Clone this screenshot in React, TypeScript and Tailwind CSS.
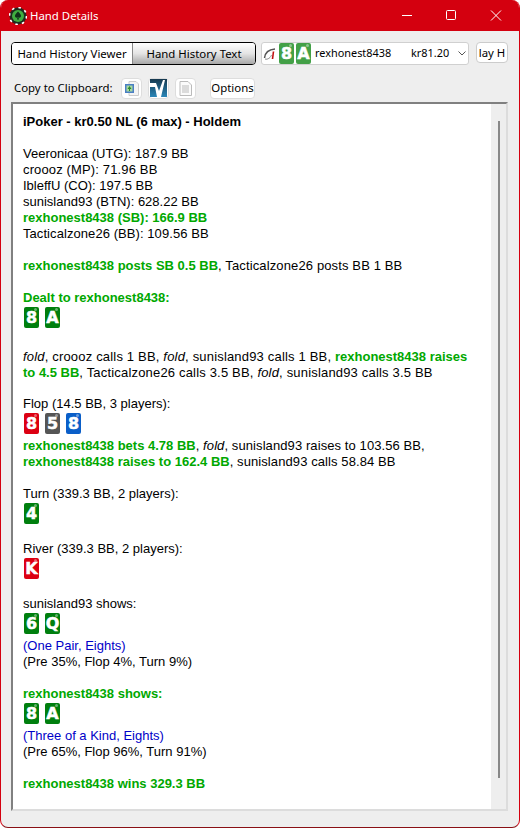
import React from "react";

const cardBg: Record<string, string> = {
  g: "bg-[#007f0e]",
  r: "bg-[#dc0012]",
  k: "bg-[#555555]",
  b: "bg-[#0a5ec8]",
  c: "bg-[#43a047]",
};

function Card({ v, c = "g" }: { v: string; c?: string }) {
  return (
    <span className={`relative flex h-[21px] w-[15px] items-center justify-center rounded-[2px] ${cardBg[c]} font-['DejaVu_Sans',sans-serif] text-[16px] leading-none font-bold text-white [-webkit-text-stroke:0.5px_white]`}>
      {v}
      <span className="absolute top-[1px] right-[2px] h-[3px] w-[3px] rounded-full bg-white/40" />
    </span>
  );
}

function Cards({ list, short }: { list: [string, string?][]; short?: boolean }) {
  return (
    <div className={`flex gap-[6px] pt-[1px] pl-[1px] ${short ? "h-[26px]" : "h-[27px]"}`}>
      {list.map(([v, c], i) => (
        <Card key={i} v={v} c={c ?? "g"} />
      ))}
    </div>
  );
}

const G = ({ children }: { children: React.ReactNode }) => <b className="tracking-normal text-[#00a800]">{children}</b>;
const Blank = () => <div className="h-4" />;

export default function App() {
  return (
    <div className="flex h-[828px] w-[520px] flex-col overflow-hidden rounded-lg border-x border-b border-x-[#d4000f] border-b-[#8a1015] bg-[#eeeeee] font-['Liberation_Sans',sans-serif] text-black">
      <div className="-mx-[1px] flex h-[31px] shrink-0 items-center bg-[#d4000f] pl-[9px] text-white">
        <svg width="18" height="18" viewBox="0 0 18 18">
          <circle cx="9" cy="9" r="8.5" fill="#1e2a1e" />
          <circle cx="9" cy="9" r="8.5" fill="none" stroke="#ffffff" strokeWidth="1.6" strokeDasharray="2.5 4.2" />
          <circle cx="9" cy="9" r="6" fill="#3fae3f" />
          <path d="M9 4.5 C10.5 6.5 12.5 7.5 12 9.6 C11.5 11 10 10.8 9.4 10 L10 12.6 H8 L8.6 10 C8 10.8 6.5 11 6 9.6 C5.5 7.5 7.5 6.5 9 4.5Z" fill="#10301a" />
        </svg>
        <span className="ml-[3px] font-['Noto_Sans',sans-serif] text-[11.4px]">Hand Details</span>
        <div className="ml-auto flex h-full items-center">
          <svg width="46" height="31" viewBox="0 0 46 31" className="text-white"><path d="M21 15.5H31" stroke="currentColor" /></svg>
          <svg width="46" height="31" viewBox="0 0 46 31"><rect x="19.5" y="10.5" width="9" height="9" rx="1" fill="none" stroke="#fff" /></svg>
          <svg width="46" height="31" viewBox="0 0 46 31"><path d="M18 10.5L28 20.5M28 10.5L18 20.5" stroke="#fff" /></svg>
          <span className="w-[1px]" />
        </div>
      </div>

      <div className="flex h-[43px] shrink-0 items-start gap-[5px] pt-[11px] pl-[10px] font-['Noto_Sans',sans-serif] text-[11.4px]">
        <div className="flex h-[23px] w-[245px] overflow-hidden rounded-[4px] border border-black">
          <div className="flex w-[121px] items-center justify-center border-r border-[#888] bg-white">Hand History Viewer</div>
          <div className="flex flex-1 items-center justify-center bg-gradient-to-b from-white via-[#e4e4e4] to-[#a8a8a8]">Hand History Text</div>
        </div>
        <div className="flex h-[23px] w-[208px] items-center rounded-[3px] border border-[#d0d0d0] bg-white pl-[1px]">
          <svg width="15" height="16" viewBox="0 0 15 16">
            <path d="M1.5 12C2 7 6 3.5 12 3" fill="none" stroke="#555" strokeWidth="1.5" />
            <path d="M2 13C5 14 8 11 8.5 9" fill="none" stroke="#888" />
            <path d="M10.5 5.5L9.5 13" stroke="#c01010" strokeWidth="1.6" />
          </svg>
          <span className="ml-[1px] flex gap-[2px]"><Card v="8" c="c" /><Card v="A" c="c" /></span>
          <span className="ml-[4px] w-[96px] text-[10.9px]">rexhonest8438</span>
          <span className="text-[10.9px]">kr81.20</span>
          <svg width="8" height="5" viewBox="0 0 8 5" className="ml-[9px]"><path d="M.5 .5L4 4L7.5 .5" fill="none" stroke="#555" /></svg>
        </div>
        <div className="ml-[2px] flex h-[21px] w-[32px] items-center justify-center overflow-hidden rounded-[4px] border border-[#ccc] bg-white whitespace-nowrap">lay H</div>
      </div>

      <div className="flex h-[28px] shrink-0 items-center pl-[13px] font-['Noto_Sans',sans-serif] text-[11.4px]">
        <span className="w-[107px]">Copy to Clipboard:</span>
        <div className="flex gap-[6px]">
          <div className="flex h-[21px] w-[21px] items-center justify-center rounded-[4px] border border-[#ddd] bg-white">
            <svg width="17" height="17" viewBox="0 0 17 17">
              <path d="M6 1.5H13L15.5 4V15.5H6Z" fill="#f4f4f4" stroke="#ccc" />
              <rect x="2" y="4" width="9" height="9" fill="#4a7fc4" />
              <rect x="3.5" y="5.5" width="6" height="6" fill="#a8d8a0" />
              <path d="M6.5 6L8.5 9H4.5Z M6 9h1v2H6Z" fill="#2c8a2c" />
            </svg>
          </div>
          <div className="flex h-[21px] w-[21px] items-center justify-center rounded-[4px] border border-[#ddd] bg-white">
            <svg width="17" height="18" viewBox="0 0 17 18">
              <defs>
                <linearGradient id="nv" x1="0" y1="0" x2="0" y2="1">
                  <stop offset="0" stopColor="#16384e" />
                  <stop offset="1" stopColor="#2a86b8" />
                </linearGradient>
              </defs>
              <rect width="17" height="18" fill="url(#nv)" />
              <path d="M0 4H6L9 12L13 1H15L11 18H7L5 8H0Z" fill="#ffffff" />
            </svg>
          </div>
          <div className="flex h-[21px] w-[21px] items-center justify-center rounded-[4px] border border-[#ddd] bg-white">
            <svg width="13" height="15" viewBox="0 0 13 15">
              <path d="M1 .5H9L12.5 4V14.5H1Z" fill="#fbfbfb" stroke="#bbb" />
              <path d="M3 5H10M3 7H10M3 9H10M3 11H10" stroke="#bbb" />
            </svg>
          </div>
        </div>
        <div className="ml-[14px] flex h-[21px] w-[45px] items-center justify-center rounded-[4px] border border-[#ddd] bg-white">Options</div>
      </div>

      <div className="mr-[11px] ml-[10px] flex min-h-0 flex-1 border-2 border-t-[#808080] border-r-[#dcdcdc] border-b-[#dcdcdc] border-l-[#808080]">
        <div className="flex-1 bg-white pt-[10px] pl-[10px] text-[13px] leading-4">
          <div><b>iPoker - kr0.50 NL (6 max) - Holdem</b></div>
          <Blank />
          <div>Veeronicaa (UTG): 187.9 BB</div>
          <div className="tracking-[0.14px]">croooz (MP): 71.96 BB</div>
          <div>IbleffU (CO): 197.5 BB</div>
          <div>sunisland93 (BTN): 628.22 BB</div>
          <div><G>rexhonest8438 (SB): 166.9 BB</G></div>
          <div className="tracking-[0.07px]">Tacticalzone26 (BB): 109.56 BB</div>
          <Blank />
          <div className="tracking-[0.13px]"><G>rexhonest8438 posts SB 0.5 BB</G>, Tacticalzone26 posts BB 1 BB</div>
          <Blank />
          <div><G>Dealt to rexhonest8438:</G></div>
          <Cards list={[["8"], ["A"]]} />
          <Blank />
          <div className="tracking-[0.18px]"><i>fold</i>, croooz calls 1 BB, <i>fold</i>, sunisland93 calls 1 BB, <G>rexhonest8438 raises<br />to 4.5 BB</G>, Tacticalzone26 calls 3.5 BB, <i>fold</i>, sunisland93 calls 3.5 BB</div>
          <div className="h-[15px]" />
          <div>Flop (14.5 BB, 3 players):</div>
          <Cards short list={[["8", "r"], ["5", "k"], ["8", "b"]]} />
          <div className="tracking-[0.09px]"><G>rexhonest8438 bets 4.78 BB</G>, <i>fold</i>, sunisland93 raises to 103.56 BB,<br /><G>rexhonest8438 raises to 162.4 BB</G>, sunisland93 calls 58.84 BB</div>
          <Blank />
          <div>Turn (339.3 BB, 2 players):</div>
          <Cards list={[["4"]]} />
          <div className="mt-[12px]">River (339.3 BB, 2 players):</div>
          <Cards list={[["K", "r"]]} />
          <div className="mt-[12px]">sunisland93 shows:</div>
          <Cards short list={[["6"], ["Q"]]} />
          <div className="text-[#0000c8]">(One Pair, Eights)</div>
          <div>(Pre 35%, Flop 4%, Turn 9%)</div>
          <Blank />
          <div><G>rexhonest8438 shows:</G></div>
          <Cards short list={[["8"], ["A"]]} />
          <div className="text-[#0000c8]">(Three of a Kind, Eights)</div>
          <div>(Pre 65%, Flop 96%, Turn 91%)</div>
          <Blank />
          <div><G>rexhonest8438 wins 329.3 BB</G></div>
        </div>
        <div className="w-[15px] pt-[17px] pl-[7px]">
          <div className="h-[657px] w-[2px] bg-[#888888]" />
        </div>
      </div>
      <div className="h-[16px] shrink-0" />
    </div>
  );
}
